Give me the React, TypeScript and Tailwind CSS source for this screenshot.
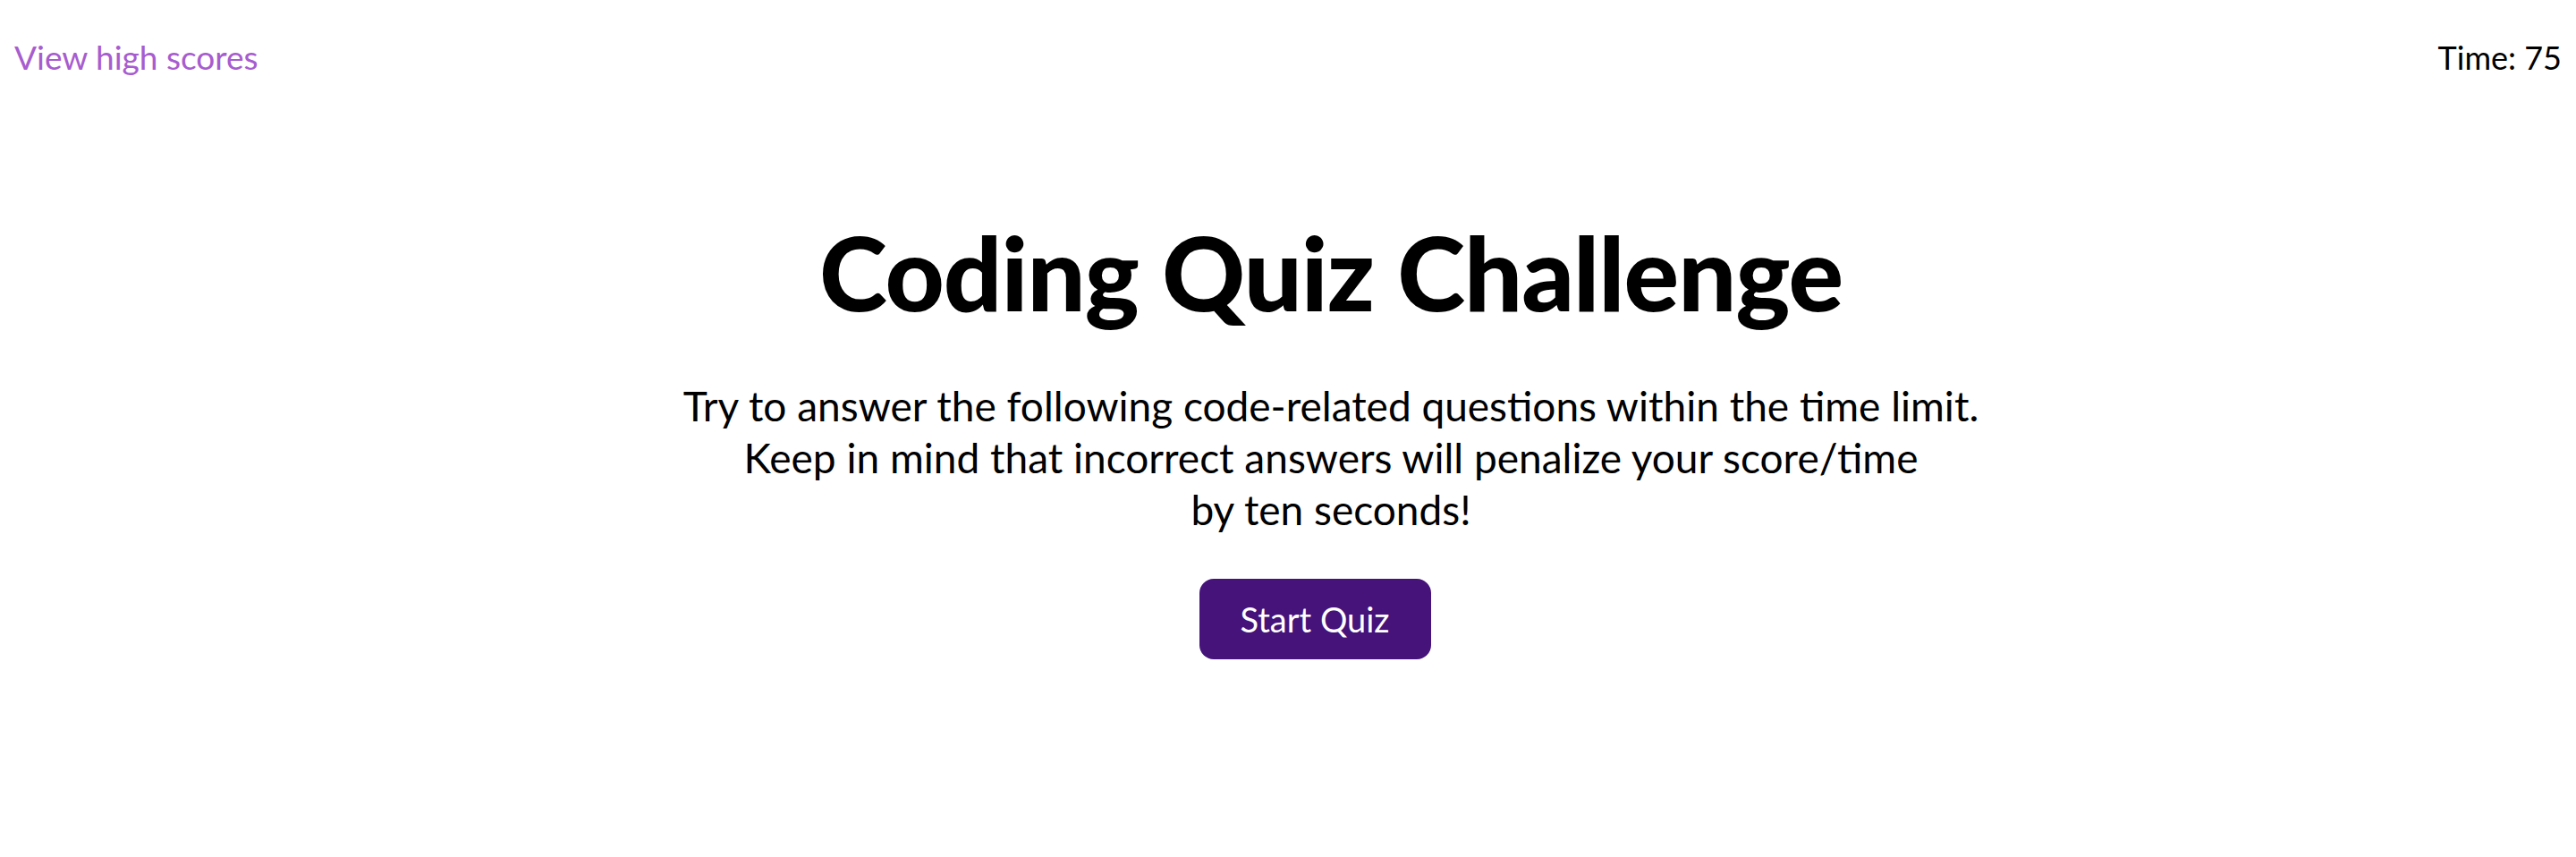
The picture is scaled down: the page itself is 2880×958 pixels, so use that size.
export default function App() {
  return (
    <div className="min-h-[958px] w-full bg-white font-['Lato',_'Open_Sans',_sans-serif] text-black">
      <header className="flex items-center justify-between px-4 pt-[40px]">
        <a href="#" className="text-[37px] leading-[48px] text-[#a75ccf]">
          View high scores
        </a>
        <div className="text-[36px] leading-[48px]">Time: 75</div>
      </header>

      <main className="flex flex-col items-center pl-[96px] pt-[150px] text-center">
        <h1 className="text-[115px] font-black leading-[130px] tracking-[-1px]">Coding Quiz Challenge</h1>
        <p className="mt-[57px] text-[46px] leading-[58px]">
          Try to answer the following code-related questions within the time limit.
          <br />
          Keep in mind that incorrect answers will penalize your score/time
          <br />
          by ten seconds!
        </p>
        <button className="mr-[36px] mt-[48px] h-[90px] w-[259px] rounded-[16px] bg-[#45137a] text-[38px] text-white">
          Start Quiz
        </button>
      </main>
    </div>
  );
}
